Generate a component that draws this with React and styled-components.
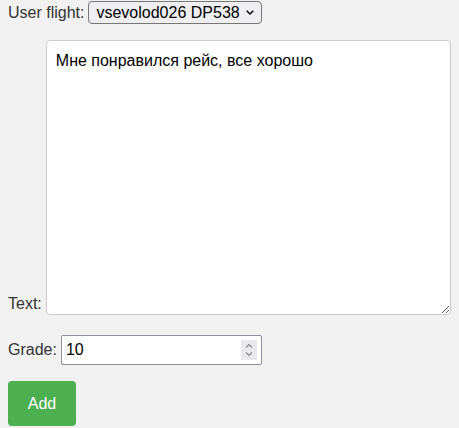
import React, { useState } from "react";
import styled, { createGlobalStyle } from "styled-components";

const GlobalStyle = createGlobalStyle`
  html, body {
    margin: 0;
    background: #f1f1f1;
  }
  body {
    font-family: "Liberation Sans", Arial, sans-serif;
    font-size: 16px;
  }
`;

const Form = styled.form`
  display: flex;
  flex-direction: column;
  padding: 1px 8px 0 8px;
`;

const Row = styled.div`
  display: flex;
  align-items: ${(p) => (p.$bottom ? "flex-end" : "center")};
  gap: 4px;
  margin-bottom: ${(p) => p.$gap || 0}px;
`;

const Label = styled.label`
  color: #333;
  font-size: 16px;
  line-height: 18px;
  padding-bottom: ${(p) => p.$drop || 0}px;
`;

const Field = styled.div`
  position: relative;
  display: flex;
`;

const Select = styled.select`
  appearance: none;
  font-family: "Liberation Sans", Arial, sans-serif;
  font-size: 16px;
  color: #000;
  height: 23px;
  width: 174px;
  padding: 0 20px 0 7px;
  border: 1px solid #767676;
  border-radius: 4px;
  background: #efeff1;
  outline: none;
`;

const Chevron = styled.svg`
  position: absolute;
  right: 8px;
  top: 9px;
  pointer-events: none;
`;

const TextArea = styled.textarea`
  font-family: "Liberation Sans", Arial, sans-serif;
  font-size: 16px;
  color: #000;
  width: 406px;
  height: 275px;
  box-sizing: border-box;
  padding: 11px 9px;
  border: 1px solid #ccc;
  border-radius: 4px;
  background: #fff;
  resize: both;
  outline: none;
`;

const NumberInput = styled.input`
  font-family: "Liberation Sans", Arial, sans-serif;
  font-size: 16px;
  color: #000;
  width: 201px;
  height: 30px;
  box-sizing: border-box;
  padding: 0 24px 0 4px;
  border: 1px solid #8f8f9d;
  border-radius: 2px;
  background: #fff;
  outline: none;
  -moz-appearance: textfield;
  &::-webkit-inner-spin-button,
  &::-webkit-outer-spin-button {
    -webkit-appearance: none;
    margin: 0;
  }
`;

const Spinner = styled.div`
  position: absolute;
  right: 5px;
  top: 5px;
  width: 16px;
  height: 20px;
  background: #e9e9ed;
  display: flex;
  align-items: center;
  justify-content: center;
  pointer-events: none;
`;

const Button = styled.button`
  align-self: flex-start;
  font-family: "Liberation Sans", Arial, sans-serif;
  font-size: 16px;
  color: #fff;
  background: #4caf50;
  border: none;
  border-radius: 4px;
  width: 68px;
  height: 45px;
  cursor: pointer;
`;

export default function App() {
  const [flight, setFlight] = useState("1");
  const [text, setText] = useState("Мне понравился рейс, все хорошо");
  const [grade, setGrade] = useState(10);

  return (
    <>
      <GlobalStyle />
      <Form onSubmit={(e) => e.preventDefault()}>
        <Row $gap={16}>
          <Label>User flight:</Label>
          <Field>
            <Select value={flight} onChange={(e) => setFlight(e.target.value)}>
              <option value="1">vsevolod026 DP538</option>
            </Select>
            <Chevron width="8" height="5" viewBox="0 0 8 5">
              <path d="M0.7 0.7 L4 4 L7.3 0.7" fill="none" stroke="#000" strokeWidth="1.4" />
            </Chevron>
          </Field>
        </Row>
        <Row $bottom $gap={20}>
          <Label $drop={2}>Text:</Label>
          <TextArea value={text} onChange={(e) => setText(e.target.value)} />
        </Row>
        <Row $gap={16}>
          <Label>Grade:</Label>
          <Field>
            <NumberInput
              type="number"
              value={grade}
              onChange={(e) => setGrade(e.target.value)}
            />
            <Spinner>
              <svg width="8" height="14" viewBox="0 0 8 14">
                <path d="M1 4.5 L4 1.5 L7 4.5 M1 9.5 L4 12.5 L7 9.5" fill="none" stroke="#8a8a8a" strokeWidth="1.2" />
              </svg>
            </Spinner>
          </Field>
        </Row>
        <Button type="submit">Add</Button>
      </Form>
    </>
  );
}
